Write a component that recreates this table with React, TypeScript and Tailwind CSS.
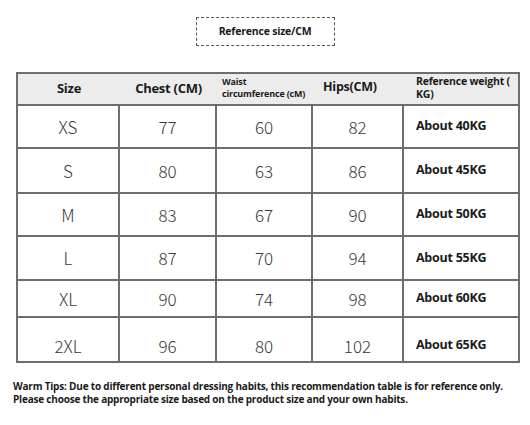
const rows = [
  { size: "XS", chest: "77", waist: "60", hips: "82", weight: "About 40KG", h: "h-[43px]", pad: "" },
  { size: "S", chest: "80", waist: "63", hips: "86", weight: "About 45KG", h: "h-[45px]", pad: "" },
  { size: "M", chest: "83", waist: "67", hips: "90", weight: "About 50KG", h: "h-[43px]", pad: "" },
  { size: "L", chest: "87", waist: "70", hips: "94", weight: "About 55KG", h: "h-[44px]", pad: "" },
  { size: "XL", chest: "90", waist: "74", hips: "98", weight: "About 60KG", h: "h-[37px]", pad: "" },
  { size: "2XL", chest: "96", waist: "80", hips: "102", weight: "About 65KG", h: "h-[43px]", pad: "pt-[12px]" },
];

const bold = "font-['Open_Sans',sans-serif] font-bold tracking-[-0.02em] text-[#1a1a1a]";
const light = "font-['Noto_Sans_CJK_SC','Noto_Sans',sans-serif] font-light text-[17px] text-[#3a3a3a]";

const App = () => {
  return (
    <div className="w-[530px] h-[425px] bg-white overflow-hidden">
      {/* Title */}
      <div className="pt-[17px] flex justify-center">
        <div className={`w-[139px] h-[29px] border border-dashed border-[#555] flex items-center justify-center text-[10.5px] ${bold}`}>
          Reference size/CM
        </div>
      </div>

      {/* Table */}
      <div className="mt-[26px] ml-[16px] w-[504px] border-2 border-[#6e6e6e]">
        <div className="flex h-[32px] bg-[#ececec] border-b-2 border-[#6e6e6e]">
          <div className={`w-[102px] flex items-center justify-center text-[13px] ${bold}`}>Size</div>
          <div className={`w-[97px] flex items-center justify-center text-[13px] ${bold}`}>Chest (CM)</div>
          <div className={`w-[96px] flex flex-col justify-center pl-[5px] pb-[3px] text-[9px] leading-[12px] ${bold}`}>
            <span>Waist</span>
            <span>circumference (cM)</span>
          </div>
          <div className={`w-[91px] flex items-center pl-[10px] pb-[3px] text-[12.5px] ${bold}`}>Hips(CM)</div>
          <div className={`flex-1 flex flex-col justify-center pl-[12px] pb-[2px] text-[10.5px] leading-[13px] ${bold}`}>
            <span>Reference weight (</span>
            <span>KG)</span>
          </div>
        </div>
        {rows.map((r, i) => (
          <div
            key={r.size}
            className={`flex ${r.h} ${i < rows.length - 1 ? "border-b-2 border-[#6e6e6e]" : ""}`}
          >
            <div className={`w-[102px] flex items-center justify-center border-r-2 border-[#6e6e6e] ${r.pad} ${light}`}>{r.size}</div>
            <div className={`w-[97px] flex items-center justify-center border-r-2 border-[#6e6e6e] ${r.pad} ${light}`}>{r.chest}</div>
            <div className={`w-[96px] flex items-center justify-center border-r-2 border-[#6e6e6e] ${r.pad} ${light}`}>{r.waist}</div>
            <div className={`w-[91px] flex items-center justify-center border-r-2 border-[#6e6e6e] ${r.pad} ${light}`}>{r.hips}</div>
            <div className={`flex-1 flex items-center pl-[12px] text-[12.5px] ${r.pad} ${bold}`}>{r.weight}</div>
          </div>
        ))}
      </div>

      {/* Tips */}
      <div className={`mt-[17px] ml-[13px] text-[10px] leading-[13px] whitespace-nowrap ${bold}`}>
        <p>Warm Tips: Due to different personal dressing habits, this recommendation table is for reference only.</p>
        <p>Please choose the appropriate size based on the product size and your own habits.</p>
      </div>
    </div>
  );
};

export default App;
